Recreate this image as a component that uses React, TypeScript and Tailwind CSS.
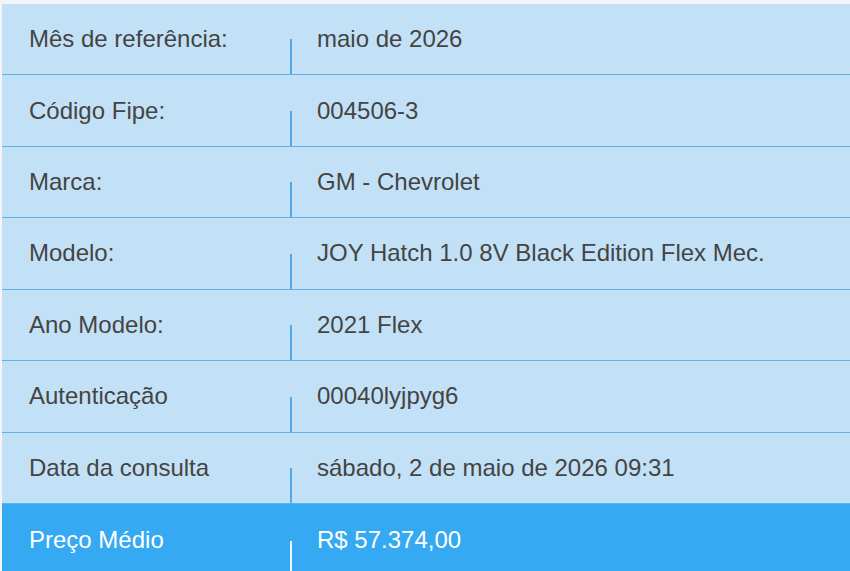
const rows = [
  { label: 'Mês de referência:', value: 'maio de 2026' },
  { label: 'Código Fipe:', value: '004506-3' },
  { label: 'Marca:', value: 'GM - Chevrolet' },
  { label: 'Modelo:', value: 'JOY Hatch 1.0 8V Black Edition Flex Mec.' },
  { label: 'Ano Modelo:', value: '2021 Flex' },
  { label: 'Autenticação', value: '00040lyjpyg6' },
  { label: 'Data da consulta', value: 'sábado, 2 de maio de 2026 09:31' },
]

export default function App() {
  return (
    <div className="min-h-screen bg-[#f2f4f8] pt-1 pl-[2px] font-['Liberation_Sans',Arial,sans-serif] text-[24px]">
      <div className="flex flex-col">
        {rows.map(r => (
          <div key={r.label} className="flex h-[71.43px] bg-[#c3e1f6] border-b border-[#5fb1ea] text-[#444]">
            <div className="w-[288px] shrink-0 flex items-center pl-[27px]">{r.label}</div>
            <div className="w-[2px] shrink-0 self-end h-[35px] bg-[#4fa9ea]" />
            <div className="flex-1 flex items-center pl-[25px]">{r.value}</div>
          </div>
        ))}
        <div className="flex h-[71.43px] bg-[#35a9f2] text-white">
          <div className="w-[288px] shrink-0 flex items-center pl-[27px]">Preço Médio</div>
          <div className="w-[2px] shrink-0 self-end h-[34px] bg-[#eaf6ff]" />
          <div className="flex-1 flex items-center pl-[25px]">R$ 57.374,00</div>
        </div>
      </div>
    </div>
  )
}
